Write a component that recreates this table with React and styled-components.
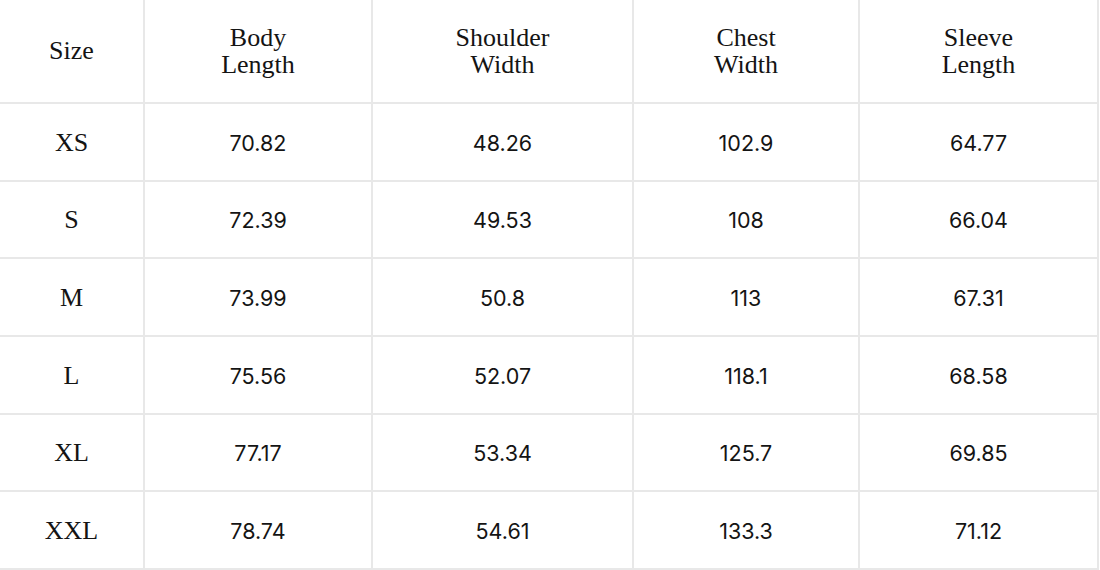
import React from "react";
import styled, { createGlobalStyle } from "styled-components";

const GlobalStyle = createGlobalStyle`
  html, body {
    margin: 0;
    padding: 0;
    background: #fff;
  }
`;

const columns = [
  { key: "size", label: ["Size"] },
  { key: "body", label: ["Body", "Length"] },
  { key: "shoulder", label: ["Shoulder", "Width"] },
  { key: "chest", label: ["Chest", "Width"] },
  { key: "sleeve", label: ["Sleeve", "Length"] },
];

const rows = [
  ["XS", "70.82", "48.26", "102.9", "64.77"],
  ["S", "72.39", "49.53", "108", "66.04"],
  ["M", "73.99", "50.8", "113", "67.31"],
  ["L", "75.56", "52.07", "118.1", "68.58"],
  ["XL", "77.17", "53.34", "125.7", "69.85"],
  ["XXL", "78.74", "54.61", "133.3", "71.12"],
];

const App = () => {
  return (
    <>
      <GlobalStyle />
      <SizeTable>
        {columns.map((col) => (
          <HeadCell key={col.key}>
            {col.label.map((line) => (
              <span key={line}>{line}</span>
            ))}
          </HeadCell>
        ))}
        {rows.map((row) =>
          row.map((value, i) => (
            <Cell key={row[0] + i} serif={i === 0}>
              {value}
            </Cell>
          ))
        )}
      </SizeTable>
    </>
  );
};

export default App;

const SizeTable = styled.div`
  display: grid;
  grid-template-columns: 145px 228px 261px 226px 239px;
  grid-template-rows: 104px repeat(6, 77.67px);
  width: 1099px;
  color: #141414;
`;

const BaseCell = styled.div`
  display: flex;
  flex-direction: column;
  align-items: center;
  justify-content: center;
  text-align: center;
  border-right: 2px solid #e8e8e8;
  border-bottom: 2px solid #e8e8e8;
`;

const HeadCell = styled(BaseCell)`
  font-family: "Liberation Serif", Georgia, serif;
  font-size: 26px;
  line-height: 27px;
  padding-bottom: 1px;
`;

const Cell = styled(BaseCell)`
  font-family: ${(p) =>
    p.serif ? '"Liberation Serif", Georgia, serif' : "Inter, sans-serif"};
  font-size: ${(p) => (p.serif ? "26px" : "21.5px")};
  padding-top: 2px;
`;
